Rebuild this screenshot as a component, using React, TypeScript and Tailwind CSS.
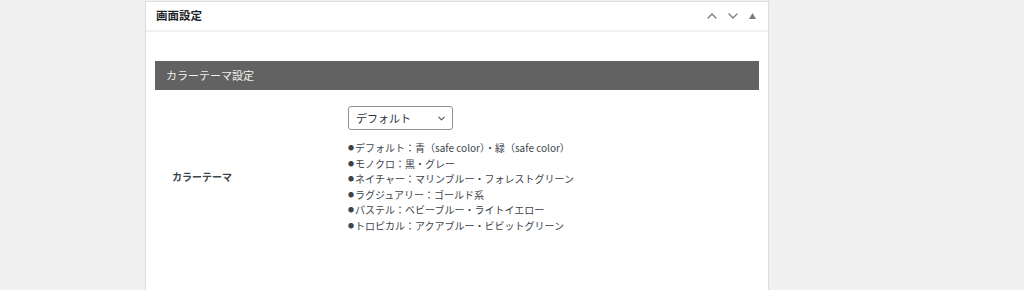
import { ChevronUp, ChevronDown } from 'lucide-react';

const themes = [
  'デフォルト：青（safe color）・緑（safe color）',
  'モノクロ：黒・グレー',
  'ネイチャー：マリンブルー・フォレストグリーン',
  'ラグジュアリー：ゴールド系',
  'パステル：ベビーブルー・ライトイエロー',
  'トロピカル：アクアブルー・ビビットグリーン',
];

const App = () => {
  return (
    <div
      className="h-[290px] w-[1024px] overflow-hidden bg-[#f0f0f1] pl-[145px] pt-px"
      style={{ fontFamily: '"Noto Sans CJK JP", "Noto Sans", sans-serif' }}
    >
      {/* Postbox */}
      <div className="w-[624px] h-[320px] border border-[#dcdcde] bg-white">
        {/* Header */}
        <div className="flex h-[30px] items-center justify-between border-b-2 border-[#f0f0f1] pl-[10px] pr-[7px]">
          <h2 className="text-[11.5px] font-bold text-[#1d2327]">画面設定</h2>
          <div className="flex items-center text-[#787c82]">
            <span className="flex w-[21px] justify-center">
              <ChevronUp size={16} strokeWidth={2} />
            </span>
            <span className="flex w-[21px] justify-center">
              <ChevronDown size={16} strokeWidth={2} />
            </span>
            <span className="flex w-[18px] justify-center">
              <svg width="7" height="6" viewBox="0 0 7 6">
                <path d="M3.5 0 L7 6 L0 6 Z" fill="currentColor" />
              </svg>
            </span>
          </div>
        </div>

        {/* Inside */}
        <div className="px-[9px] pt-[29px]">
          <div className="flex h-[29px] items-center bg-[#626262] pl-[11px] text-[11px] text-[#f0f0f0]">
            カラーテーマ設定
          </div>

          <div className="flex items-center">
            <div className="w-[193px] pl-[17px] pt-[30px] text-[10px] font-bold text-[#3c434a]">
              カラーテーマ
            </div>
            <div className="pt-[16px]">
              <div className="flex h-[24px] w-[105px] items-center justify-between rounded-[3px] border border-[#8c8f94] bg-white pl-[7px] pr-[5px] text-[11px] text-[#2c3338]">
                <span>デフォルト</span>
                <ChevronDown size={11} strokeWidth={2.5} className="text-[#50575e]" />
              </div>
              <ul className="mt-[10px] text-[10px] leading-[15.6px] text-[#3c434a]">
                {themes.map((t) => (
                  <li key={t} className="flex items-center">
                    <span className="mr-[1px] inline-flex w-[6px] justify-center text-[6px]">●</span>
                    <span>{t}</span>
                  </li>
                ))}
              </ul>
            </div>
          </div>
        </div>
      </div>
    </div>
  );
};

export default App;
